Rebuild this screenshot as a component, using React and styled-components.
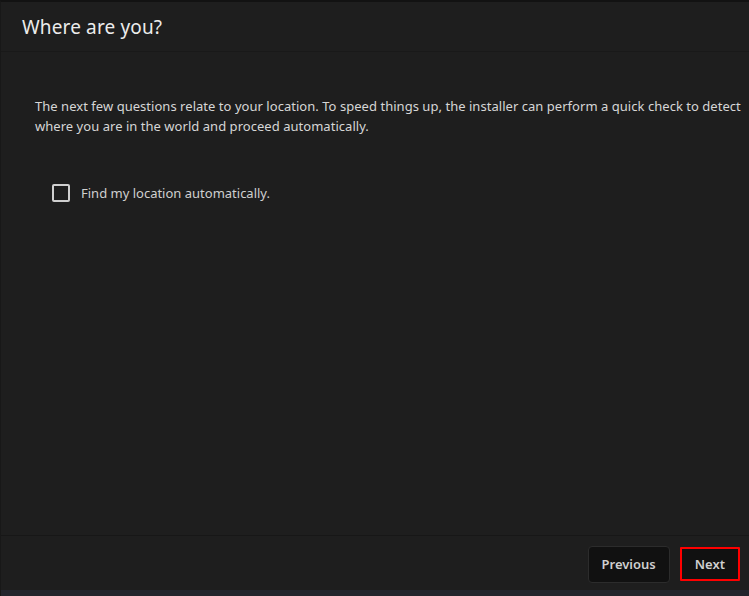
import React from 'react'
import styled, { createGlobalStyle } from 'styled-components'

const GlobalStyle = createGlobalStyle`
  html, body {
    margin: 0;
    padding: 0;
    background: #1e1e1e;
    font-family: "Noto Sans", "Open Sans", sans-serif;
  }
`

export default function App() {
  return (
    <>
      <GlobalStyle />
      <Window>
        <Header>
          <Title>Where are you?</Title>
        </Header>
        <Content>
          <Intro>
            The next few questions relate to your location. To speed things up, the installer can perform a quick check to detect where you are in the world and proceed automatically.
          </Intro>
          <CheckRow>
            <CheckBox type="checkbox" />
            <CheckLabel>Find my location automatically.</CheckLabel>
          </CheckRow>
        </Content>
        <Footer>
          <NavButton>Previous</NavButton>
          <NavButton $focused>Next</NavButton>
        </Footer>
        <BottomStrip />
      </Window>
    </>
  )
}

const Window = styled.div`
  width: 749px;
  height: 596px;
  display: flex;
  flex-direction: column;
  background: #1e1e1e;
  border-top: 2px solid #121212;
  border-left: 1px solid #181818;
  box-sizing: border-box;
  overflow: hidden;
`

const Header = styled.div`
  height: 49px;
  display: flex;
  align-items: center;
  padding-left: 21px;
  border-bottom: 1px solid #191919;
  flex-shrink: 0;
`

const Title = styled.h1`
  margin: 0;
  font-size: 19px;
  font-weight: 400;
  letter-spacing: 0.14px;
  color: #ececec;
`

const Content = styled.div`
  flex: 1;
  padding: 44px 0 0 34px;
`

const Intro = styled.p`
  margin: 0;
  width: 730px;
  font-size: 13px;
  line-height: 20px;
  letter-spacing: 0.035px;
  color: #d6d6d6;
`

const CheckRow = styled.label`
  display: flex;
  align-items: center;
  gap: 11px;
  margin: 48px 0 0 17px;
`

const CheckBox = styled.input`
  appearance: none;
  margin: 0;
  width: 18px;
  height: 18px;
  border: 2px solid #cfcfcf;
  border-radius: 2px;
  box-sizing: border-box;
  background: transparent;
`

const CheckLabel = styled.span`
  font-size: 13px;
  color: #d0d0d0;
`

const Footer = styled.div`
  height: 55px;
  flex-shrink: 0;
  box-sizing: border-box;
  padding: 2px 9px 0 0;
  border-top: 1px solid #171717;
  display: flex;
  align-items: center;
  justify-content: flex-end;
  gap: 10px;
`

const NavButton = styled.button`
  height: ${(p) => (p.$focused ? '34px' : '37px')};
  padding: 0 13px;
  background: #111111;
  border: ${(p) => (p.$focused ? '2px solid #ff0000' : '1px solid #2c2c2c')};
  border-radius: ${(p) => (p.$focused ? '1px' : '4px')};
  color: #cfcfcf;
  font-family: "Noto Sans", "Open Sans", sans-serif;
  font-size: 13px;
  font-weight: 600;
`

const BottomStrip = styled.div`
  height: 6px;
  flex-shrink: 0;
  background: #23242c;
`
